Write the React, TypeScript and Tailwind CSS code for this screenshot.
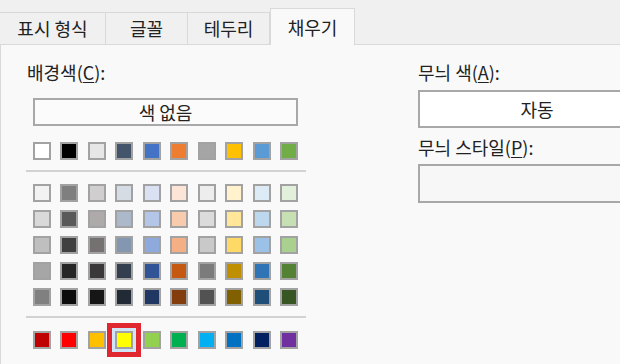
import React from "react";

const themeRow = [
  "bg-[#ffffff]",
  "bg-[#000000]",
  "bg-[#e7e6e6]",
  "bg-[#44546a]",
  "bg-[#4472c4]",
  "bg-[#ed7d31]",
  "bg-[#a5a5a5]",
  "bg-[#ffc000]",
  "bg-[#5b9bd5]",
  "bg-[#70ad47]",
];

const shadeRows = [
  ["bg-[#f2f2f2]", "bg-[#7f7f7f]", "bg-[#d0cece]", "bg-[#d6dce4]", "bg-[#d9e1f2]", "bg-[#fce4d6]", "bg-[#ededed]", "bg-[#fff2cc]", "bg-[#ddebf7]", "bg-[#e2efda]"],
  ["bg-[#d9d9d9]", "bg-[#595959]", "bg-[#aeaaaa]", "bg-[#acb9ca]", "bg-[#b4c6e7]", "bg-[#f8cbad]", "bg-[#dbdbdb]", "bg-[#ffe699]", "bg-[#bdd7ee]", "bg-[#c6e0b4]"],
  ["bg-[#bfbfbf]", "bg-[#404040]", "bg-[#757171]", "bg-[#8497b0]", "bg-[#8ea9db]", "bg-[#f4b084]", "bg-[#c9c9c9]", "bg-[#ffd966]", "bg-[#9bc2e6]", "bg-[#a9d08e]"],
  ["bg-[#a6a6a6]", "bg-[#262626]", "bg-[#3a3838]", "bg-[#333f4f]", "bg-[#305496]", "bg-[#c65911]", "bg-[#7b7b7b]", "bg-[#bf8f00]", "bg-[#2f75b5]", "bg-[#548235]"],
  ["bg-[#808080]", "bg-[#0d0d0d]", "bg-[#161616]", "bg-[#222b35]", "bg-[#203764]", "bg-[#833c0c]", "bg-[#525252]", "bg-[#806000]", "bg-[#1f4e78]", "bg-[#375623]"],
];

const standardRow = [
  "bg-[#c00000]",
  "bg-[#ff0000]",
  "bg-[#ffc000]",
  "bg-[#ffff00]",
  "bg-[#92d050]",
  "bg-[#00b050]",
  "bg-[#00b0f0]",
  "bg-[#0070c0]",
  "bg-[#002060]",
  "bg-[#7030a0]",
];

const Swatch: React.FC<{ color: string; selected?: boolean }> = ({ color, selected }) => (
  <div className="relative h-[18px] w-[18px]">
    {selected && (
      <div className="absolute -inset-[8px] border-[5px] border-[#e0262e] bg-[#cfe6f8]" />
    )}
    <div className={`relative h-[18px] w-[18px] border-2 border-[#a2a2a2] ${color}`} />
  </div>
);

const SwatchRow: React.FC<{ colors: string[]; selectedIndex?: number }> = ({ colors, selectedIndex }) => (
  <div className="flex w-[265px] justify-between">
    {colors.map((c, i) => (
      <Swatch key={i} color={c} selected={i === selectedIndex} />
    ))}
  </div>
);

const Tab: React.FC<{ label: string; width: string; active?: boolean }> = ({ label, width, active }) =>
  active ? (
    <div
      className={`relative z-10 -mb-px flex h-[37px] items-center justify-center border-x border-t border-[#d9d9d9] bg-[#f9f9f9] ${width}`}
    >
      {label}
    </div>
  ) : (
    <div
      className={`flex h-[32px] items-center justify-center border-r border-t border-[#d9d9d9] bg-[#f0f0f0] ${width}`}
    >
      {label}
    </div>
  );

export default function App() {
  return (
    <div className="h-[364px] w-[620px] overflow-hidden bg-[#f0f0f0] font-['Noto_Sans_CJK_KR','Noto_Sans',sans-serif] text-[18px] text-[#222222]">
      {/* Tabs */}
      <div className="flex h-[44px] items-end">
        <Tab label="표시 형식" width="w-[106px]" />
        <Tab label="글꼴" width="w-[82px]" />
        <Tab label="테두리" width="w-[82px]" />
        <Tab label="채우기" width="w-[85px]" active />
      </div>

      {/* Panel */}
      <div className="flex h-[320px] border-l border-t border-[#d9d9d9] bg-[#f9f9f9]">
        {/* Background colour */}
        <div className="ml-[25px] flex w-[280px] flex-none flex-col pt-[15px]">
          <div className="ml-[1px] leading-[24px]">
            배경색(<span className="underline underline-offset-2">C</span>):
          </div>
          <div className="ml-[7px] mt-[14px] flex h-[28px] w-[265px] items-center justify-center border-2 border-[#a8a8a8] bg-[#fbfbfb] leading-[24px]">
            색 없음
          </div>
          <div className="ml-[7px] mt-[16px]">
            <SwatchRow colors={themeRow} />
          </div>
          <div className="mt-[10px] h-[2px] w-[280px] bg-[#d2d2d2]" />
          <div className="ml-[7px] mt-[12px] flex flex-col gap-[8px]">
            {shadeRows.map((row, i) => (
              <SwatchRow key={i} colors={row} />
            ))}
          </div>
          <div className="mt-[10px] h-[2px] w-[280px] bg-[#d2d2d2]" />
          <div className="ml-[7px] mt-[13px]">
            <SwatchRow colors={standardRow} selectedIndex={3} />
          </div>
        </div>

        {/* Pattern */}
        <div className="ml-[112px] flex w-[240px] flex-none flex-col pt-[15px]">
          <div className="leading-[24px]">
            무늬 색(<span className="underline underline-offset-2">A</span>):
          </div>
          <div className="mt-[6px] flex h-[38px] w-[238px] items-center justify-center border-2 border-[#a8a8a8] bg-white leading-[24px]">
            자동
          </div>
          <div className="mt-[7px] leading-[24px]">
            무늬 스타일(<span className="underline underline-offset-2">P</span>):
          </div>
          <div className="mt-[5px] h-[39px] w-[238px] border-2 border-[#a8a8a8] bg-[#f7f7f7]" />
        </div>
      </div>
    </div>
  );
}
